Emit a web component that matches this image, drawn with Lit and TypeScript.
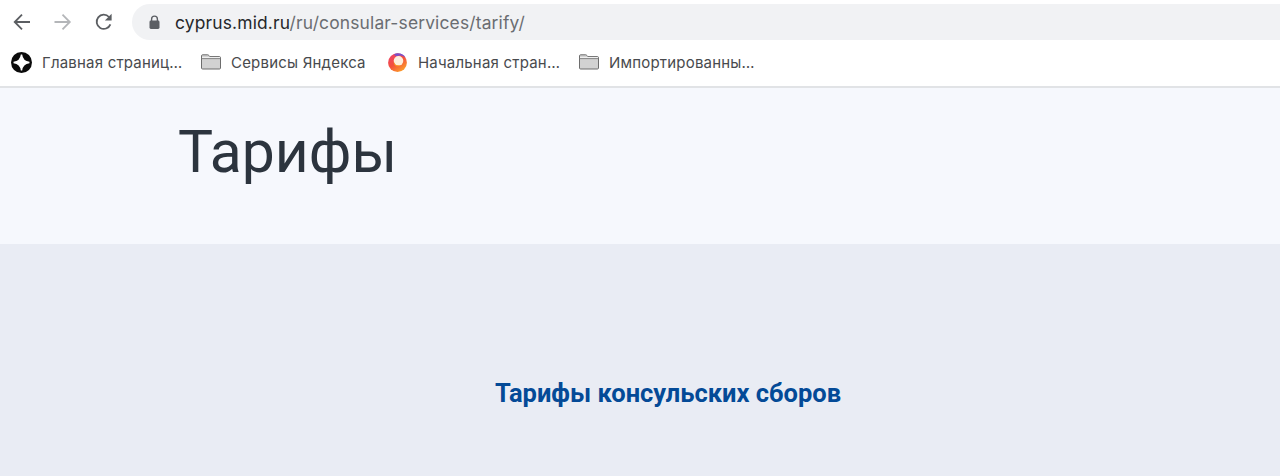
import { LitElement, html, css, svg } from "lit";
import { customElement } from "lit/decorators.js";

const folder = svg`<svg class="ic-folder" width="22" height="16" viewBox="0 0 22 16"><path d="M1.500 3V1.800C1.500 1.200 2 .8 2.500.8h5.200c.5 0 .8.2 1.100.6L9.800 2.600h9.700c.6 0 1 .4 1 1V14c0 .6-.4 1-1 1h-17c-.6 0-1-.4-1-1Z" fill="#d2d2d2" stroke="#6d6d6d" stroke-width="1"/><path d="M1.500 4.600h19" stroke="#7a7a7a" stroke-width="1" fill="none"/><path d="M2 3.100h18v1H2Z" fill="#f2f2f2"/></svg>`;

@customElement("app-root")
export class AppRoot extends LitElement {
  static styles = css`
    :host { display: block; width: 1280px; height: 476px; overflow: hidden; background: #e9ecf4; font-family: "Roboto", "Liberation Sans", sans-serif; }
    .toolbar { height: 44px; background: #fff; display: flex; align-items: flex-start; box-sizing: border-box; padding-top: 4px; }
    .navs { width: 132px; height: 36px; display: flex; align-items: center; flex: none; }
    .nav { display: block; flex: none; }
    .back { margin-left: 12px; }
    .fwd { margin-left: 21px; }
    .reload { margin-left: 21px; }
    .omni { flex: 1; height: 36px; background: #f1f2f4; border-radius: 18px 0 0 18px; display: flex; align-items: center; padding-left: 17px; box-sizing: border-box; }
    .lock { flex: none; margin-right: 15px; }
    .url { font-family: "Inter", "Liberation Sans", sans-serif; font-size: 17.4px; color: #6a6d71; white-space: nowrap; letter-spacing: 0.17px; }
    .host { color: #25272a; }
    .bookmarks { height: 40px; padding-bottom: 4px; margin-top: -2px; background: #fff; border-bottom: 2px solid #e1e3e6; box-sizing: content-box; display: flex; align-items: center; padding-left: 11px; font-family: "Inter", "Liberation Sans", sans-serif; font-size: 15px; letter-spacing: 0.2px; color: #484a4d; }
    .bm { display: flex; align-items: center; flex: none; white-space: nowrap; }
    .bm svg { flex: none; }
    .b1 { width: 189px; } .b1 span { margin-left: 10px; }
    .b2 { width: 187px; } .b2 span { margin-left: 9px; }
    .b3 { width: 191px; } .b3 span { margin-left: 10px; }
    .b4 span { margin-left: 9px; }
    .header { height: 156px; background: #f6f8fd; box-sizing: border-box; padding: 26px 0 0 178px; }
    h1 { margin: 0; font-weight: 400; font-size: 58.8px; line-height: 76px; color: #2c343e; }
    .content { display: flex; padding: 131px 0 0 495px; }
    h2 { margin: 0; font-weight: 700; font-size: 25.5px; line-height: 36px; color: #044a97; white-space: nowrap; }
  `;

  render() {
    return html`
      <div class="toolbar">
        <div class="navs">
          <svg class="nav back" width="20" height="20" viewBox="0 0 20 20" fill="none" stroke="#5b5e62" stroke-width="1.8"><path d="M18 10H3M10 2.700 2.700 10l7.300 7.300"/></svg>
          <svg class="nav fwd" width="20" height="20" viewBox="0 0 20 20" fill="none" stroke="#b4b6b9" stroke-width="1.8"><path d="M1.500 10h15M9.500 2.700l7.300 7.300-7.300 7.300"/></svg>
          <svg class="nav reload" width="20" height="20" viewBox="0 0 20 20" fill="none"><path d="M16.400 12.400A7.100 7.100 0 1 1 15 5" stroke="#5b5e62" stroke-width="1.8"/><path d="M17.600 1.800v6.700h-6.700Z" fill="#5b5e62"/></svg>
        </div>
        <div class="omni">
          <svg class="lock" width="11" height="14" viewBox="0 0 11 14"><path d="M2.600 6V4a2.900 2.900 0 0 1 5.800 0v2" fill="none" stroke="#5c5f64" stroke-width="1.4"/><rect x=".5" y="5.500" width="10" height="8.500" rx="1.400" fill="#5c5f64"/></svg>
          <span class="url"><span class="host">cyprus.mid.ru</span>/ru/consular-services/tarify/</span>
        </div>
      </div>
      <div class="bookmarks">
        <div class="bm b1">
          <svg width="21" height="21" viewBox="0 0 21 21"><circle cx="10.500" cy="10.500" r="10.500" fill="#0b0b0b"/><path d="M10.500 2.600C11 7 14 10 18.400 10.500 14 11 11 14 10.500 18.400 10 14 7 11 2.600 10.500 7 10 10 7 10.500 2.600Z" fill="#fff" stroke="#fff" stroke-width="1.400"/></svg>
          <span>Главная страниц…</span>
        </div>
        <div class="bm b2">${folder}<span>Сервисы Яндекса</span></div>
        <div class="bm b3">
          <svg width="21" height="21" viewBox="0 0 21 21">
            <defs><linearGradient id="ff" x1="0" y1="0" x2="0.7" y2="1"><stop offset="0" stop-color="#ee3f70"/><stop offset=".55" stop-color="#f4503c"/><stop offset="1" stop-color="#fca02a"/></linearGradient></defs>
            <circle cx="10.500" cy="10.700" r="9.400" fill="url(#ff)"/>
            <path d="M7 2.200C11 .2 17 1.600 19 6.400 17 4 13.600 3 11 4 9.200 4.400 8 3.600 7 2.200Z" fill="#7a4fc9"/>
            <circle cx="11.500" cy="8.800" r="4.800" fill="#fdeedd"/>
            <path d="M6.800 9.600c.6 3.200 3.600 4.800 6.600 3.600-2 2.300-7.200 1.100-6.600-3.600Z" fill="#f7a21f"/>
          </svg>
          <span>Начальная стран…</span>
        </div>
        <div class="bm b4">${folder}<span>Импортированны…</span></div>
      </div>
      <div class="header"><h1>Тарифы</h1></div>
      <div class="content"><h2>Тарифы консульских сборов</h2></div>
    `;
  }
}
